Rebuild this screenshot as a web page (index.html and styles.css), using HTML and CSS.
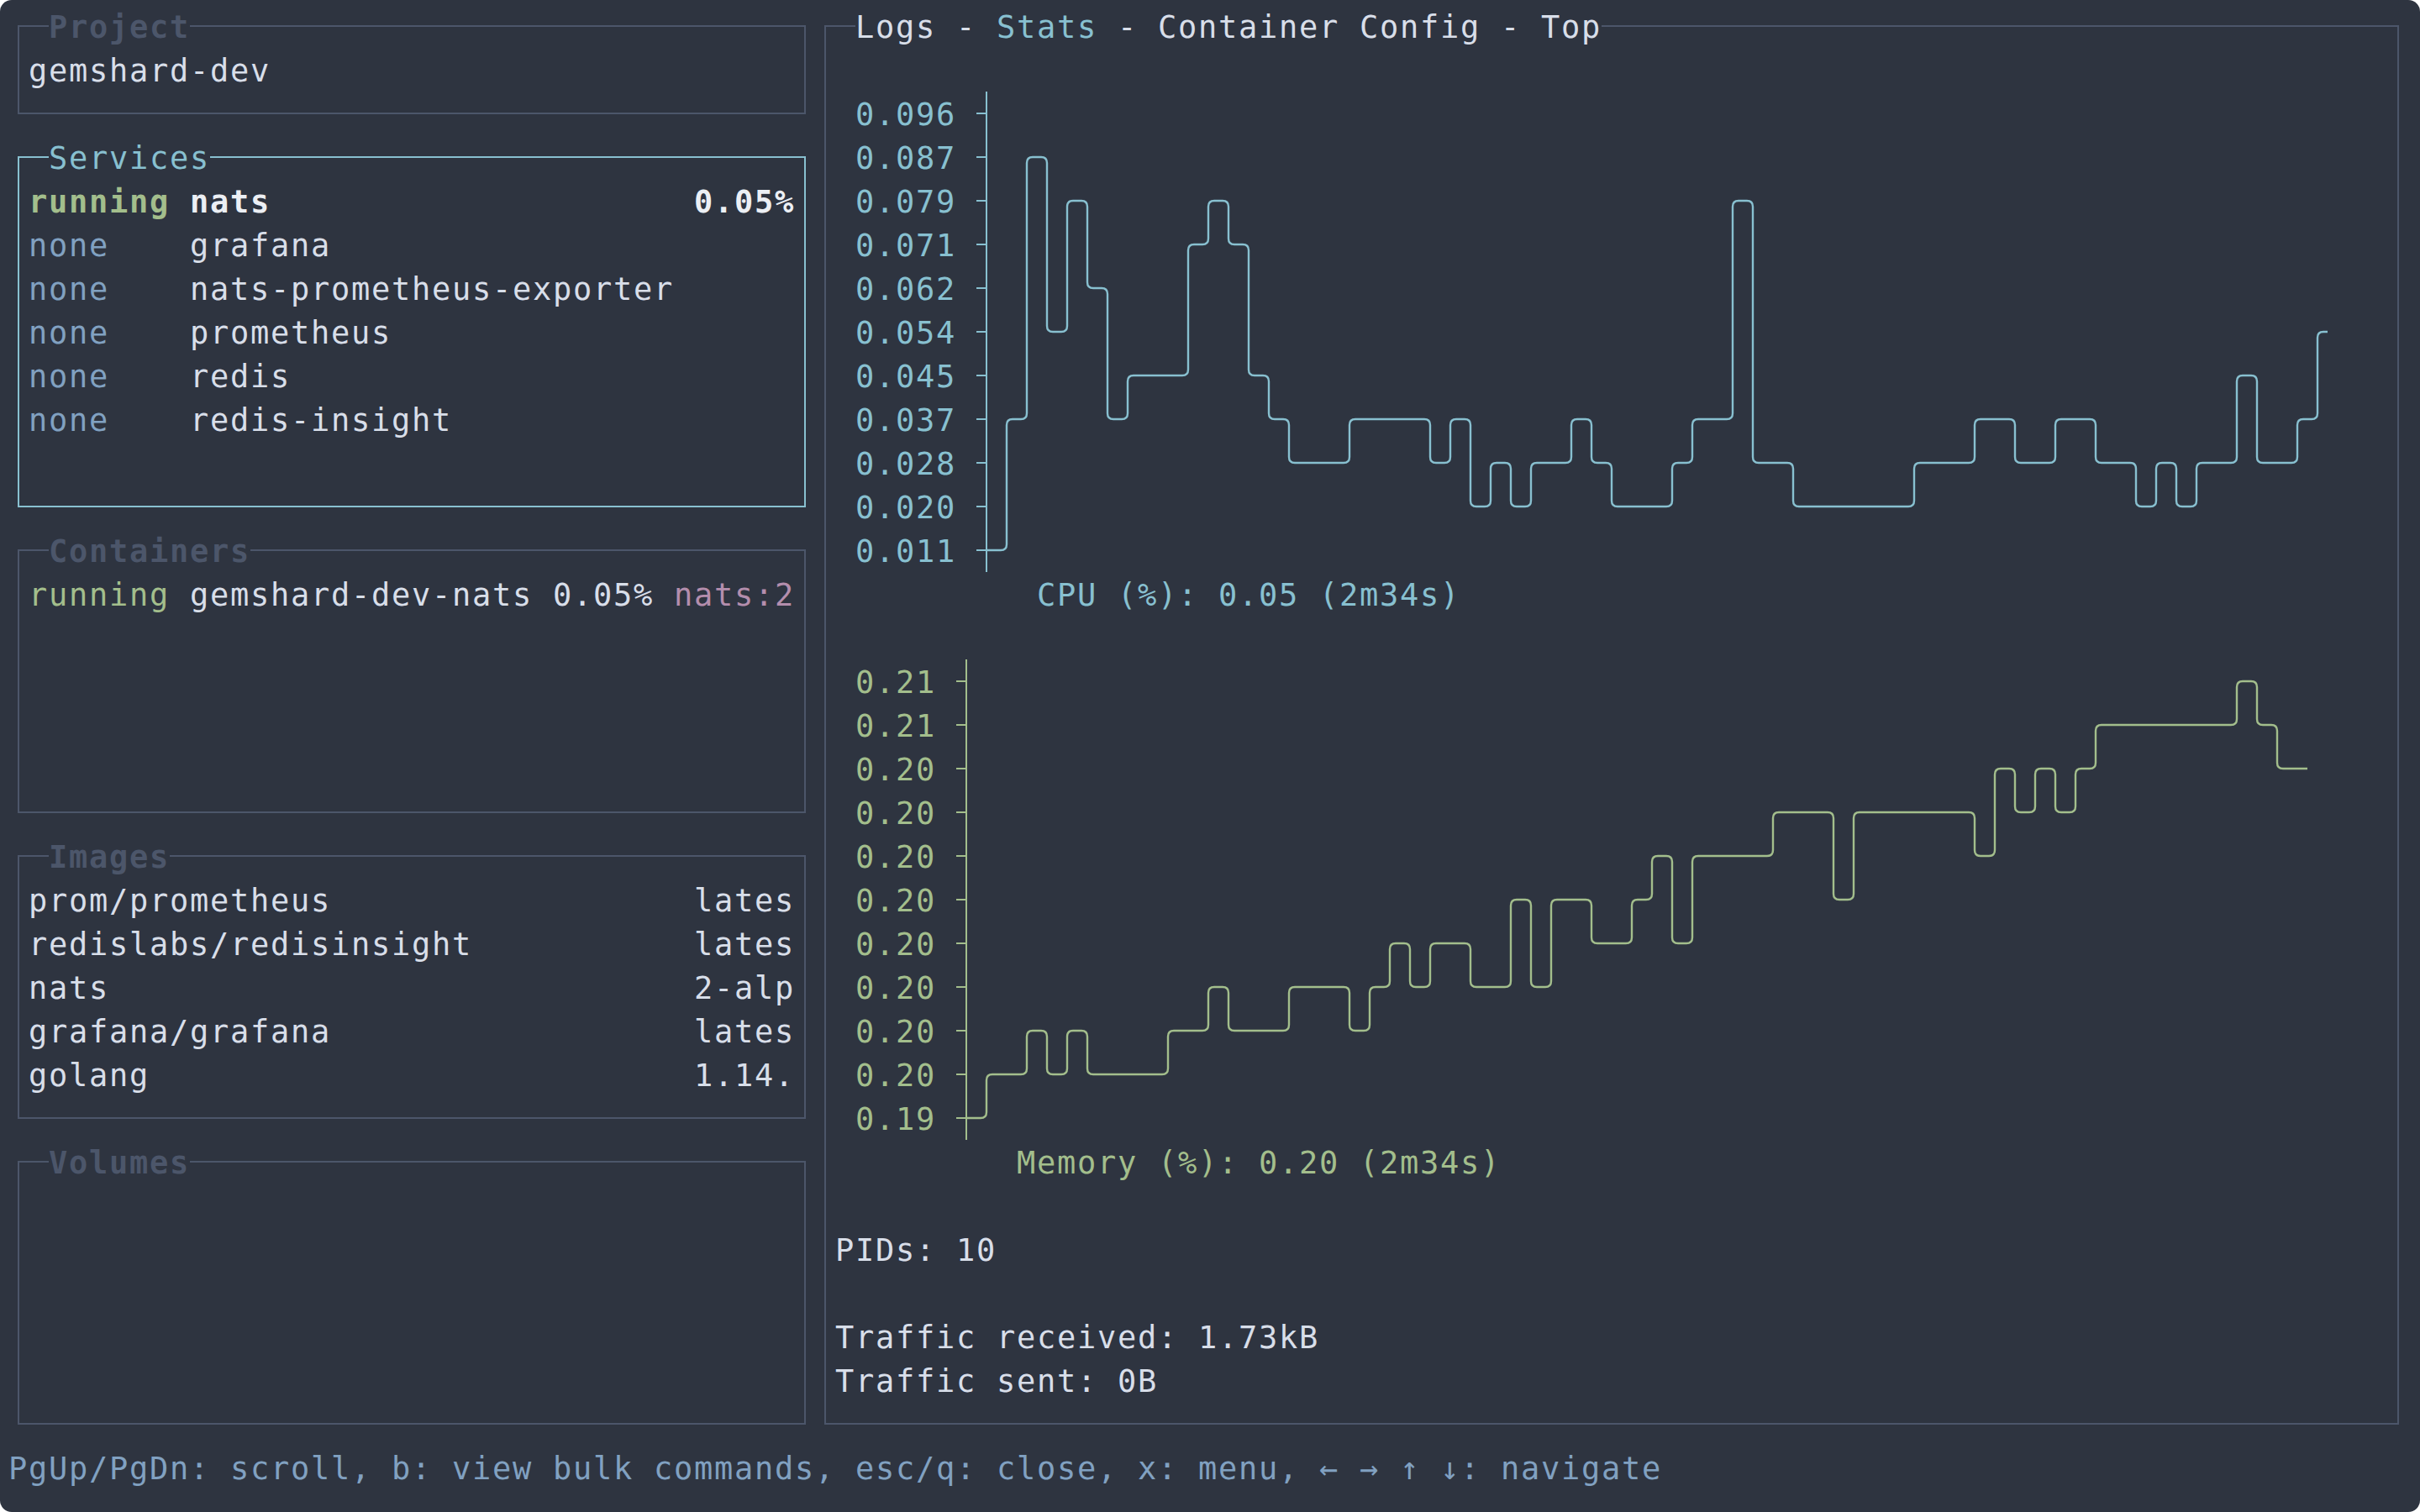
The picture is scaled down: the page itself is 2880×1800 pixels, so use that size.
FILE: index.html
```html
<!DOCTYPE html>
<html lang="en">
<head>
<meta charset="utf-8">
<title>lazydocker - gemshard-dev</title>
<link rel="stylesheet" href="styles.css">
</head>
<body>
<div class="window">
  <div class="main">
    <div class="side">
      <section class="box">
        <h2 class="title">Project</h2>
        <div class="line">gemshard-dev</div>
      </section>
      <section class="box focused">
        <h2 class="title">Services</h2>
        <div class="row sel"><span><span class="green">running</span> nats</span><span>0.05%</span></div>
        <div class="line"><span class="blue">none</span>    grafana</div>
        <div class="line"><span class="blue">none</span>    nats-prometheus-exporter</div>
        <div class="line"><span class="blue">none</span>    prometheus</div>
        <div class="line"><span class="blue">none</span>    redis</div>
        <div class="line"><span class="blue">none</span>    redis-insight</div>
      </section>
      <section class="box">
        <h2 class="title">Containers</h2>
        <div class="line"><span class="green">running</span> gemshard-dev-nats 0.05% <span class="magenta">nats:2</span></div>
      </section>
      <section class="box">
        <h2 class="title">Images</h2>
        <div class="row"><span>prom/prometheus</span><span>lates</span></div>
        <div class="row"><span>redislabs/redisinsight</span><span>lates</span></div>
        <div class="row"><span>nats</span><span>2-alp</span></div>
        <div class="row"><span>grafana/grafana</span><span>lates</span></div>
        <div class="row"><span>golang</span><span>1.14.</span></div>
      </section>
      <section class="box">
        <h2 class="title">Volumes</h2>
      </section>
    </div>
    <section class="box detail">
      <h2 class="title plain">Logs - <span class="cyan">Stats</span> - Container Config - Top</h2>
      <div class="line"></div>
      <div class="chart cpu">
        <div class="labels">
          <div>0.096</div><div>0.087</div><div>0.079</div><div>0.071</div><div>0.062</div><div>0.054</div><div>0.045</div><div>0.037</div><div>0.028</div><div>0.020</div><div>0.011</div>
        </div>
        <svg class="plot" id="cpu-plot" width="1608" height="572" viewBox="0 0 1608 572"><path class="axis"/><path class="series"/></svg>
      </div>
      <div class="line cyan">          CPU (%): 0.05 (2m34s)</div>
      <div class="line"></div>
      <div class="chart mem">
        <div class="labels">
          <div>0.21</div><div>0.21</div><div>0.20</div><div>0.20</div><div>0.20</div><div>0.20</div><div>0.20</div><div>0.20</div><div>0.20</div><div>0.20</div><div>0.19</div>
        </div>
        <svg class="plot" id="mem-plot" width="1608" height="572" viewBox="0 0 1608 572"><path class="axis"/><path class="series"/></svg>
      </div>
      <div class="line green">         Memory (%): 0.20 (2m34s)</div>
      <div class="line"></div>
      <div class="line">PIDs: 10</div>
      <div class="line"></div>
      <div class="line">Traffic received: 1.73kB</div>
      <div class="line">Traffic sent: 0B</div>
    </section>
  </div>
  <div class="footer">PgUp/PgDn: scroll, b: view bulk commands, esc/q: close, x: menu, ← → ↑ ↓: navigate</div>
</div>
<script src="script.js"></script>
</body>
</html>
```
FILE: styles.css
```css
html, body {
  margin: 0;
  background: #ffffff;
}
body {
  font-family: "DejaVu Sans Mono", "Liberation Mono", monospace;
  font-size: 37px;
  letter-spacing: 1.724px;
  line-height: 52px;
  color: #d8dee9;
}
.window {
  width: 2880px;
  height: 1800px;
  box-sizing: border-box;
  padding: 5px 14px 0 10px;
  background: #2e3440;
  border-radius: 14px;
  overflow: hidden;
}
.main {
  display: grid;
  grid-template-columns: 960px 1896px;
  height: 1716px;
}
.side {
  display: grid;
  grid-template-rows: 156px 468px 364px 364px 364px;
}
.box {
  margin: 25px 11px;
  border: 2px solid #4c566a;
  padding: 25px 11px;
  display: flex;
  flex-direction: column;
  min-height: 0;
}
.box.focused {
  border-color: #88c0d0;
}
.title {
  margin: -52px 0 0 24px;
  font: inherit;
  font-weight: bold;
  height: 52px;
  box-sizing: border-box;
  padding-top: 2px;
  align-self: flex-start;
  background: #2e3440;
  color: #4c566a;
  white-space: pre;
}
.focused .title {
  font-weight: normal;
  color: #88c0d0;
}
.title.plain {
  font-weight: normal;
  color: #d8dee9;
}
.line,
.row,
.labels div,
.footer {
  height: 52px;
  box-sizing: border-box;
  padding-top: 2px;
  white-space: pre;
  flex-shrink: 0;
}
.row {
  display: flex;
  justify-content: space-between;
}
.row.sel {
  font-weight: bold;
  color: #eceff4;
}
.green { color: #a3be8c; }
.blue { color: #81a1c1; }
.cyan { color: #88c0d0; }
.magenta { color: #b48ead; }
.chart {
  display: flex;
  height: 572px;
  flex-shrink: 0;
}
.labels {
  box-sizing: border-box;
  padding-left: 24px;
  flex-shrink: 0;
}
.cpu .labels { width: 168px; color: #88c0d0; }
.mem .labels { width: 144px; color: #a3be8c; }
.plot {
  display: block;
  flex-shrink: 0;
}
.plot path {
  fill: none;
  stroke-width: 2.4;
}
.plot path.axis {
  stroke-width: 2;
}
.cpu .plot path { stroke: #88c0d0; }
.mem .plot path { stroke: #a3be8c; }
.footer {
  color: #81a1c1;
}
```
FILE: script.js
```js
(function () {
  var CW = 24, RH = 52, R = 7;
  function y(r) { return r * RH + RH / 2; }
  function series(vals) {
    var d = 'M' + CW / 2 + ' ' + y(vals[0]) + ' H' + CW;
    for (var i = 1; i < vals.length; i++) {
      var a = vals[i - 1], b = vals[i];
      var L = i * CW, X = L + CW / 2, Rt = L + CW;
      if (a === b) { d += ' H' + Rt; continue; }
      var ya = y(a), yb = y(b), s = b < a ? -1 : 1;
      d += ' H' + (X - R) + ' Q' + X + ' ' + ya + ' ' + X + ' ' + (ya + s * R) +
           ' V' + (yb - s * R) + ' Q' + X + ' ' + yb + ' ' + (X + R) + ' ' + yb + ' H' + Rt;
    }
    return d;
  }
  function axis(rows) {
    var d = 'M' + CW / 2 + ' 0 V' + rows * RH;
    for (var r = 0; r < rows; r++) d += ' M0 ' + y(r) + ' H' + CW / 2;
    return d;
  }
  var cpu = [12,9,3,7,4,6,9,8,8,8,5,4,5,8,9,10,10,10,9,9,9,9,10,9,11,10,11,10,10,9,10,11,11,11,10,9,9,4,10,10,11,11,11,11,11,11,10,10,10,9,9,10,10,9,9,10,10,11,10,11,10,10,8,10,10,9,7]
    .map(function (v) { return v - 2; });
  var mem = [25,24,24,23,24,23,24,24,24,24,23,23,22,23,23,23,22,22,22,23,22,21,22,21,21,22,22,20,22,20,20,21,21,20,19,21,19,19,19,19,18,18,18,20,18,18,18,18,18,18,19,17,18,17,18,17,16,16,16,16,16,16,16,15,16,17,17]
    .map(function (v) { return v - 15; });
  [['cpu-plot', cpu], ['mem-plot', mem]].forEach(function (p) {
    var svg = document.getElementById(p[0]);
    svg.querySelector('.axis').setAttribute('d', axis(11));
    svg.querySelector('.series').setAttribute('d', series(p[1]));
  });
})();
```
